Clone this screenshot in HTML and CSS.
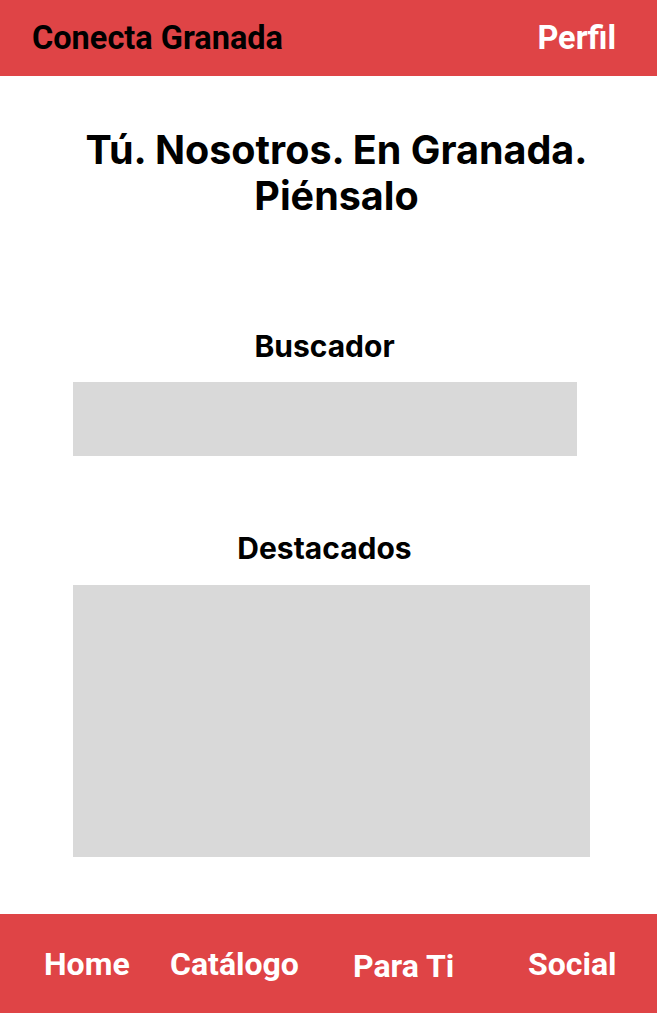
FILE: index.html
```html
<!DOCTYPE html>
<html>

<head>
    <link rel="stylesheet" href="styles.css">
</head>

<body>
    <div id="page">
        <div id="topbar">
            <div class="brand">Conecta Granada</div>
            <div class="profile">Perfil</div>
        </div>

        <div id="content">
            <h1 class="slogan">Tú. Nosotros. En Granada.<br>Piénsalo</h1>

            <div class="block">
                <h2 class="block-title">Buscador</h2>
                <div class="search-box"></div>
            </div>

            <div class="block">
                <h2 class="block-title">Destacados</h2>
                <div class="featured-box"></div>
            </div>
        </div>

        <div id="bottombar">
            <div class="nav-item">Home</div>
            <div class="nav-item">Catálogo</div>
            <div class="nav-item nav-low">Para Ti</div>
            <div class="nav-item">Social</div>
        </div>
    </div>
</body>

</html>
```

FILE: styles.css
```css
body {
    margin: 0;
    background-color: #fff;
}

#page {
    display: flex;
    flex-direction: column;
    height: 1013px;
}

#topbar {
    height: 76px;
    background-color: #df4446;
    display: flex;
    align-items: center;
    justify-content: space-between;
    padding: 0 41px 0 32px;
    font: bold 32.5px Roboto, sans-serif;
}

.brand {
    color: #000;
}

.profile {
    color: #fff;
}

#content {
    flex: 1;
    display: flex;
    flex-direction: column;
    align-items: center;
    font-family: Inter, sans-serif;
}

.slogan {
    margin: 51px 0 0 0;
    padding-left: 16px;
    font-size: 39.5px;
    line-height: 46px;
    font-weight: 700;
    text-align: center;
    color: #000;
}

.block {
    display: flex;
    flex-direction: column;
    align-items: center;
    width: 100%;
}

.block-title {
    margin: 0;
    padding-right: 8px;
    font-size: 30px;
    line-height: 36px;
    font-weight: 700;
    color: #000;
}

.block:nth-of-type(1) {
    margin-top: 109px;
}

.block:nth-of-type(2) {
    margin-top: 74px;
}

.block-title + div {
    align-self: flex-start;
    margin-left: 73px;
    background-color: #d9d9d9;
}

.search-box {
    margin-top: 18px;
    width: 504px;
    height: 74px;
}

.featured-box {
    margin-top: 19px;
    width: 517px;
    height: 272px;
}

#bottombar {
    height: 99px;
    background-color: #df4446;
    display: grid;
    grid-template-columns: 126px 183px 175px 1fr;
    align-items: center;
    padding-left: 44px;
    font: bold 32px Roboto, sans-serif;
    color: #fff;
}

.nav-low {
    padding-top: 4px;
}
```
